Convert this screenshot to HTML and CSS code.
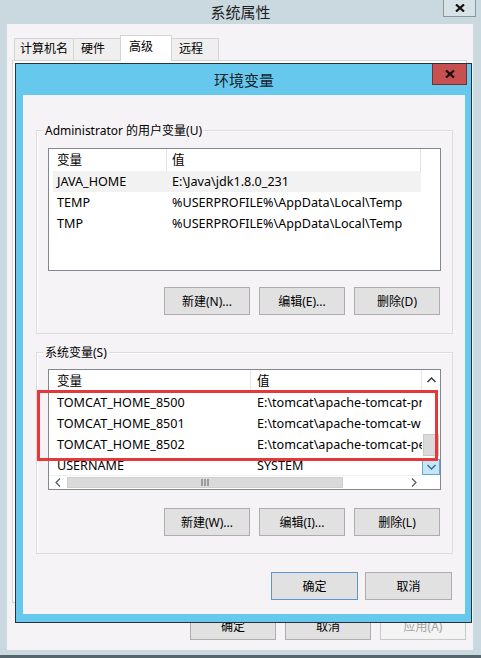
FILE: index.html
```html
<!DOCTYPE html>
<html lang="zh-CN">
<head>
  <meta charset="UTF-8" />
  <title>系统属性 - 环境变量</title>
  <link rel="stylesheet" href="styles.css">
</head>
<body>
  <!-- Background window: System Properties -->
  <div class="window">
    <div class="window-title">
      系统属性
      <span class="title-close">
        <svg width="10" height="8" viewBox="0 0 10 8"><path d="M1 0.5 L9 7.5 M9 0.5 L1 7.5" stroke="#111" stroke-width="2.2" /></svg>
      </span>
    </div>
    <div class="window-client">
      <div class="tabs">
        <div class="tab">计算机名</div>
        <div class="tab tab-wide">硬件</div>
        <div class="tab active">高级</div>
        <div class="tab tab-wide">远程</div>
      </div>
      <div class="tab-panel"></div>
      <div class="window-footer">
        <button class="btn">确定</button>
        <button class="btn">取消</button>
        <button class="btn" disabled>应用(A)</button>
      </div>
    </div>
  </div>

  <!-- Foreground dialog: Environment Variables -->
  <div class="dialog">
    <div class="dialog-title">环境变量</div>
    <span class="dialog-close">
      <svg width="10" height="8" viewBox="0 0 10 8"><path d="M1 0.5 L9 7.5 M9 0.5 L1 7.5" stroke="#1a0d0d" stroke-width="2.2" /></svg>
    </span>
    <div class="dialog-client">

      <div class="group">
        <span class="group-label">Administrator 的用户变量(U)</span>
        <div class="listview user-list">
          <div class="lv-row lv-header">
            <div class="cell col-name">变量</div>
            <div class="cell col-value">值</div>
          </div>
          <div class="lv-row hot">
            <div class="cell col-name">JAVA_HOME</div>
            <div class="cell col-value">E:\Java\jdk1.8.0_231</div>
          </div>
          <div class="lv-row">
            <div class="cell col-name">TEMP</div>
            <div class="cell col-value">%USERPROFILE%\AppData\Local\Temp</div>
          </div>
          <div class="lv-row">
            <div class="cell col-name">TMP</div>
            <div class="cell col-value">%USERPROFILE%\AppData\Local\Temp</div>
          </div>
        </div>
        <div class="group-buttons">
          <button class="btn">新建(N)...</button>
          <button class="btn">编辑(E)...</button>
          <button class="btn">删除(D)</button>
        </div>
      </div>

      <div class="group group-sys">
        <span class="group-label">系统变量(S)</span>
        <div class="listview sys-list">
          <div class="lv-body">
            <div class="lv-row lv-header">
              <div class="cell col-name">变量</div>
              <div class="cell col-value">值</div>
            </div>
            <div class="lv-row">
              <div class="cell col-name">TOMCAT_HOME_8500</div>
              <div class="cell col-value">E:\tomcat\apache-tomcat-pr</div>
            </div>
            <div class="lv-row">
              <div class="cell col-name">TOMCAT_HOME_8501</div>
              <div class="cell col-value">E:\tomcat\apache-tomcat-w</div>
            </div>
            <div class="lv-row">
              <div class="cell col-name">TOMCAT_HOME_8502</div>
              <div class="cell col-value">E:\tomcat\apache-tomcat-pe</div>
            </div>
            <div class="lv-row">
              <div class="cell col-name">USERNAME</div>
              <div class="cell col-value">SYSTEM</div>
            </div>
          </div>
          <!-- vertical scrollbar -->
          <div class="vscroll">
            <div class="sb-btn sb-up">
              <svg width="9" height="6" viewBox="0 0 9 6"><path d="M0.5 5 L4.5 1 L8.5 5" fill="none" stroke="#333" stroke-width="1.4" /></svg>
            </div>
            <div class="sb-track"></div>
            <div class="sb-thumb-v"></div>
            <div class="sb-gap"></div>
            <div class="sb-btn sb-down">
              <svg width="9" height="6" viewBox="0 0 9 6"><path d="M0.5 1 L4.5 5 L8.5 1" fill="none" stroke="#2c6e9a" stroke-width="1.4" /></svg>
            </div>
          </div>
          <!-- horizontal scrollbar -->
          <div class="hscroll">
            <div class="sb-btn sb-left">
              <svg width="6" height="9" viewBox="0 0 6 9"><path d="M5 0.5 L1 4.5 L5 8.5" fill="none" stroke="#555" stroke-width="1.2" /></svg>
            </div>
            <div class="sb-thumb-h">
              <svg width="8" height="7" viewBox="0 0 8 7"><path d="M1 0 V7 M4 0 V7 M7 0 V7" stroke="#606060" stroke-width="1" /></svg>
            </div>
            <div class="sb-track"></div>
            <div class="sb-btn sb-right">
              <svg width="6" height="9" viewBox="0 0 6 9"><path d="M1 0.5 L5 4.5 L1 8.5" fill="none" stroke="#555" stroke-width="1.2" /></svg>
            </div>
          </div>
          <div class="sb-corner"></div>
        </div>
        <div class="group-buttons">
          <button class="btn">新建(W)...</button>
          <button class="btn">编辑(I)...</button>
          <button class="btn">删除(L)</button>
        </div>
        <!-- red annotation box around the tomcat rows -->
        <div class="mark"></div>
      </div>

      <div class="dialog-footer">
        <button class="btn btn-default">确定</button>
        <button class="btn">取消</button>
      </div>
    </div>
  </div>
</body>
</html>
```

FILE: styles.css
```css
/* Global */
* {
  box-sizing: border-box;
}
body {
  margin: 0;
  width: 481px;
  height: 658px;
  overflow: hidden;
  position: relative;
  background: #c9d9df;
  font-family: "Noto Sans", "Noto Sans CJK SC", sans-serif;
  font-size: 12px;
  color: #000;
}

/* Background window */
.window {
  height: 658px;
  display: flex;
  flex-direction: column;
  border-bottom: 3px solid #56646b;
}
.window-title {
  height: 24px;
  position: relative;
  display: flex;
  align-items: center;
  justify-content: center;
  font-size: 15px;
  color: #1e1e1e;
  padding-bottom: 1px;
}
.title-close {
  position: absolute;
  top: 0;
  right: 5px;
  width: 33px;
  height: 17px;
  background: #d6e2e6;
  border: 1px solid #8a989e;
  border-top: none;
  display: flex;
  align-items: center;
  justify-content: center;
}
.window-client {
  height: 626px;
  margin: 0 8px 0 7px;
  padding: 11px 6px 0 5px;
  background: #f5f3f5;
}
.tabs {
  display: flex;
  align-items: flex-end;
  height: 25px;
  margin-left: 2px;
}
.tab {
  height: 22px;
  line-height: 20px;
  padding: 0 5px;
  background: #efefef;
  border: 1px solid #d4d4d4;
  border-bottom: none;
  margin-right: -1px;
}
.tab-wide {
  width: 48px;
  padding-left: 7px;
}
.tab.active {
  width: 52px;
  height: 26px;
  line-height: 22px;
  padding-left: 8px;
  margin-bottom: -1px;
  background: #fff;
  position: relative;
  z-index: 1;
}
.tab-panel {
  height: 543px;
  background: #fdfdfd;
  border: 1px solid #d4d4d4;
}
.window-footer {
  display: flex;
  justify-content: flex-end;
  gap: 9px;
  margin-top: 9px;
  padding-right: 1px;
}

/* Buttons */
.btn {
  width: 86px;
  height: 28px;
  padding: 0;
  font: inherit;
  color: #000;
  background: #e1e1e1;
  border: 1px solid #adadad;
}
.btn:disabled {
  color: #a3a3a3;
  background: #f4f4f4;
  border-color: #c8c8c8;
}
.btn-default {
  border-color: #5b97c9;
}

/* Environment variables dialog */
.dialog {
  position: absolute;
  left: 15px;
  top: 63px;
  width: 457px;
  height: 560px;
  padding: 0 6px 8px 7px;
  background: #67c8ee;
  border: 1px solid #25343b;
  display: flex;
  flex-direction: column;
  z-index: 5;
}
.dialog-title {
  height: 31px;
  display: flex;
  align-items: center;
  justify-content: center;
  font-size: 15px;
  color: #15232b;
}
.dialog-close {
  position: absolute;
  top: 0;
  right: 4px;
  width: 35px;
  height: 21px;
  background: #c75050;
  border: 1px solid #6e3434;
  border-top: none;
  display: flex;
  align-items: center;
  justify-content: center;
}
.dialog-client {
  height: 519px;
  padding: 35px 12px 0 13px;
  background: #f5f3f5;
}

/* Group boxes */
.group {
  position: relative;
  padding: 17px 11px 18px 11px;
  border: 1px solid #dcdcdc;
  box-shadow: inset 1px 1px 0 #fff;
}
.group-sys {
  margin-top: 18px;
  padding: 16px 11px 17px 11px;
}
.group-label {
  position: absolute;
  top: -9px;
  left: 6px;
  padding: 0 2px;
  line-height: 17px;
  background: #f5f3f5;
}
.group-buttons {
  display: flex;
  justify-content: flex-end;
  gap: 9px;
  margin-top: 16px;
  padding-right: 1px;
}
.group-sys .group-buttons {
  margin-top: 18px;
}

/* List views */
.listview {
  background: #fff;
  border: 1px solid #828790;
  overflow: hidden;
}
.user-list {
  height: 123px;
}
.lv-row {
  display: flex;
  height: 21px;
  line-height: 21px;
}
.lv-header {
  height: 22px;
  line-height: 22px;
}
.cell {
  white-space: nowrap;
  overflow: hidden;
  font-size: 12.6px;
}
.col-name {
  width: 118px;
  padding-left: 8px;
}
.col-value {
  width: 254px;
  padding-left: 5px;
}
.lv-header .cell {
  border-right: 1px solid #e5e5e5;
}
.lv-row.hot {
  background: linear-gradient(to right, #fff 4px, #f2f2f2 4px);
  width: 372px;
}
.sys-list {
  height: 121px;
  display: grid;
  grid-template-columns: 1fr 18px;
  grid-template-rows: 1fr 14px;
}
.sys-list .col-name {
  width: 202px;
}
.sys-list .col-value {
  width: 171px;
  padding-left: 6px;
}
.lv-body {
  overflow: hidden;
}

/* Scrollbars */
.vscroll {
  display: flex;
  flex-direction: column;
  background: #fff;
}
.sb-btn {
  display: flex;
  align-items: center;
  justify-content: center;
  background: #fff;
}
.sb-up {
  height: 20px;
}
.sb-track {
  flex: 1;
}
.sb-thumb-v {
  height: 22px;
  margin: 0 1px;
  background: #dadada;
  border: 1px solid #c9c9c9;
}
.sb-gap {
  height: 3px;
}
.sb-down {
  height: 16px;
  background: #c6e6f7;
  border: 1px solid #5fa8d6;
}
.hscroll {
  display: flex;
  background: #fff;
  border-top: 1px solid #f0f0f0;
}
.sb-left,
.sb-right {
  width: 17px;
}
.sb-left {
  margin-right: 1px;
}
.sb-thumb-h {
  width: 276px;
  margin: 1px 0;
  background: #dadada;
  border: 1px solid #cfcfcf;
  display: flex;
  align-items: center;
  justify-content: center;
}
.sb-corner {
  background: #fff;
}

/* Red annotation */
.mark {
  position: absolute;
  left: 0;
  top: 37px;
  width: 401px;
  height: 71px;
  border: 3px solid #e5383b;
}

.dialog-footer {
  display: flex;
  justify-content: flex-end;
  gap: 7px;
  margin-top: 18px;
  padding-right: 1px;
}
.dialog-footer .btn {
  width: 87px;
}
```
